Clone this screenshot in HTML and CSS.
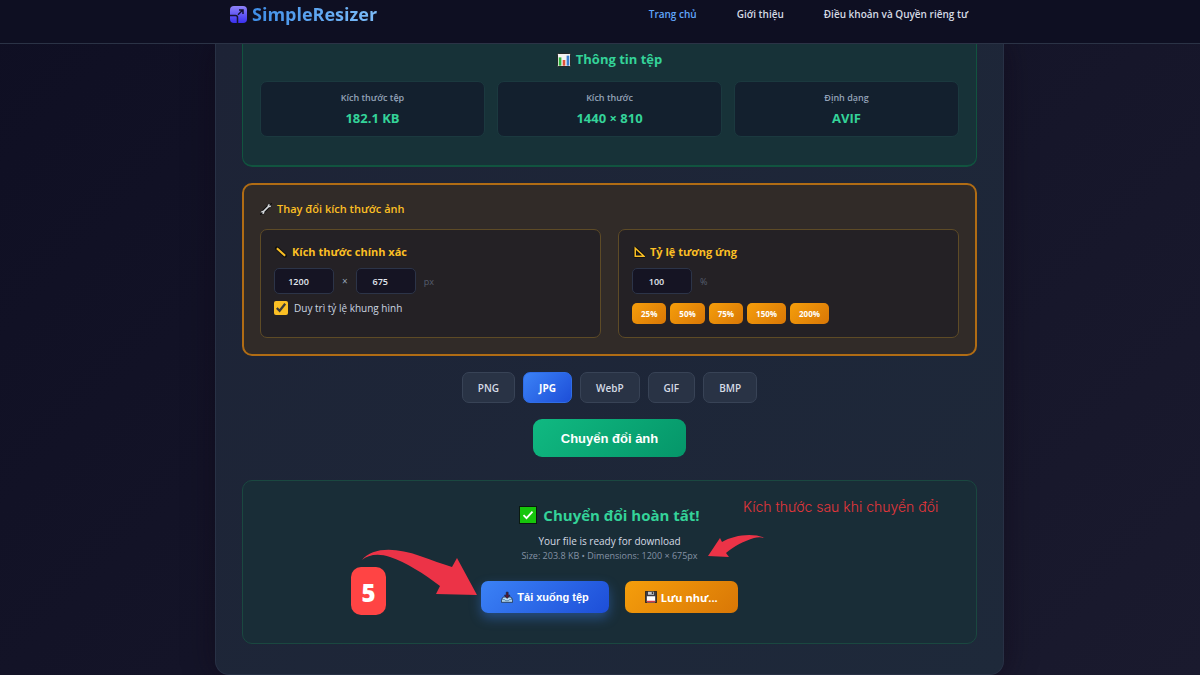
FILE: index.html
```html
<!DOCTYPE html>
<html lang="vi">
<head>
  <meta charset="UTF-8">
  <meta name="viewport" content="width=device-width, initial-scale=1.0">
  <title>SimpleResizer</title>
  <link rel="stylesheet" href="styles.css">
</head>
<body>
  <header class="header">
    <div class="header-content">
      <a href="#" class="logo">
        <svg class="logo-icon" viewBox="0 0 17 17" aria-hidden="true">
          <defs>
            <linearGradient id="logo-fill" x1="0" y1="0" x2="0" y2="1">
              <stop offset="0" stop-color="#8f83f8"/>
              <stop offset="1" stop-color="#3a30f0"/>
            </linearGradient>
          </defs>
          <rect width="17" height="17" rx="4" fill="url(#logo-fill)"/>
          <path d="M0 9.5h5.5q2 0 2 2V17M8 8.800l4.500-4.500M9 4h4v4" fill="none" stroke="#15132f" stroke-width="1.500"/>
        </svg>
        <span class="logo-text">SimpleResizer</span>
      </a>
      <nav class="nav">
        <a href="#" class="active">Trang chủ</a>
        <a href="#">Giới thiệu</a>
        <a href="#">Điều khoản và Quyền riêng tư</a>
      </nav>
    </div>
  </header>

  <main class="container">
    <section class="file-info">
      <h2 class="info-title">
        <svg class="emoji" viewBox="0 0 16 16" aria-hidden="true">
          <rect x="0.500" y="0.500" width="15" height="15" rx="1" fill="#f3f3f3" stroke="#111"/>
          <path d="M2 5h3v9.500H2z" fill="#2fb13a"/>
          <path d="M6.500 8h3v6.500h-3z" fill="#e0533a"/>
          <path d="M11 3h3v11.500h-3z" fill="#3c7fd0"/>
        </svg>
        Thông tin tệp
      </h2>
      <div class="info-grid">
        <div class="info-item">
          <div class="info-label">Kích thước tệp</div>
          <div class="info-value">182.1 KB</div>
        </div>
        <div class="info-item">
          <div class="info-label">Kích thước</div>
          <div class="info-value">1440 × 810</div>
        </div>
        <div class="info-item">
          <div class="info-label">Định dạng</div>
          <div class="info-value">AVIF</div>
        </div>
      </div>
    </section>

    <section class="resize">
      <h2 class="resize-title">
        <svg class="emoji small" viewBox="0 0 16 16" aria-hidden="true">
          <path d="M3.500 12.500l9-9" stroke="#111" stroke-width="5" stroke-linecap="round"/>
          <path d="M3.500 12.500l9-9" stroke="#d5d8dc" stroke-width="2.200"/>
          <circle cx="3.500" cy="12.500" r="2.300" fill="#d5d8dc"/>
          <circle cx="12.500" cy="3.500" r="2.300" fill="#d5d8dc"/>
          <path d="M12.800 3.200L16 0M3.200 12.800L0 16" stroke="#111" stroke-width="1.800"/>
        </svg>
        Thay đổi kích thước ảnh
      </h2>
      <div class="resize-grid">
        <div class="resize-box">
          <h3 class="box-title">
            <svg class="emoji small" viewBox="0 0 16 16" aria-hidden="true">
              <path d="M2.500 3l11 10" stroke="#111" stroke-width="5" stroke-linecap="round"/>
              <path d="M2.500 3l11 10" stroke="#fbbf24" stroke-width="2.800"/>
            </svg>
            Kích thước chính xác
          </h3>
          <div class="input-row">
            <input type="text" class="num-input" value="1200" aria-label="Chiều rộng">
            <span class="times">×</span>
            <input type="text" class="num-input" value="675" aria-label="Chiều cao">
            <span class="unit">px</span>
          </div>
          <label class="ratio">
            <input type="checkbox" checked>
            Duy trì tỷ lệ khung hình
          </label>
        </div>
        <div class="resize-box">
          <h3 class="box-title">
            <svg class="emoji small" viewBox="0 0 16 16" aria-hidden="true">
              <path d="M3 3v10.500h11.500z" fill="none" stroke="#111" stroke-width="4.500" stroke-linejoin="round"/>
              <path d="M3 3v10.500h11.500z" fill="none" stroke="#fbbf24" stroke-width="2"/>
            </svg>
            Tỷ lệ tương ứng
          </h3>
          <div class="input-row">
            <input type="text" class="num-input" value="100" aria-label="Tỷ lệ phần trăm">
            <span class="unit">%</span>
          </div>
          <div class="presets">
            <button type="button">25%</button>
            <button type="button">50%</button>
            <button type="button">75%</button>
            <button type="button">150%</button>
            <button type="button">200%</button>
          </div>
        </div>
      </div>
    </section>

    <div class="formats">
      <button type="button" class="format-btn">PNG</button>
      <button type="button" class="format-btn selected">JPG</button>
      <button type="button" class="format-btn">WebP</button>
      <button type="button" class="format-btn">GIF</button>
      <button type="button" class="format-btn">BMP</button>
    </div>

    <button type="button" class="convert-btn">Chuyển đổi ảnh</button>

    <section class="result">
      <h2 class="result-title">
        <svg class="emoji large" viewBox="0 0 18 18" aria-hidden="true">
          <rect x="0.500" y="0.500" width="17" height="17" fill="#16c60c" stroke="#0a1a10"/>
          <path d="M4.500 9.200l3 3 6-6.500" fill="none" stroke="#fff" stroke-width="1.800"/>
        </svg>
        Chuyển đổi hoàn tất!
      </h2>
      <p class="result-text">Your file is ready for download</p>
      <p class="result-size">Size: 203.8 KB • Dimensions: 1200 × 675px</p>
      <div class="result-actions">
        <button type="button" class="action-btn download">
          <svg class="emoji small" viewBox="0 0 16 16" aria-hidden="true">
            <path d="M3 8h10l2.500 3.500V15H0.500v-3.500z" fill="#b9dcf5" stroke="#14202e"/>
            <path d="M1 11.500h4l1 1.500h4l1-1.500h4" fill="none" stroke="#3b6e9a"/>
            <path d="M7 1.500h2.500v4H12L8.200 10 4.500 5.500H7z" fill="#5a1730" stroke="#14202e" stroke-width="0.800"/>
          </svg>
          Tải xuống tệp
        </button>
        <button type="button" class="action-btn save">
          <svg class="emoji small" viewBox="0 0 16 16" aria-hidden="true">
            <path d="M0.500 0.500h15v15h-15z" fill="#3c3c44" stroke="#15151a"/>
            <path d="M4 1h8v4H4z" fill="#c8c8cc"/>
            <path d="M9 1.500h2V4H9z" fill="#333"/>
            <path d="M2.500 7h11v8h-11z" fill="#fff"/>
            <path d="M2.500 13h11v2h-11z" fill="#d23a4a"/>
          </svg>
          Lưu như...
        </button>
      </div>

      <div class="note">Kích thước sau khi chuyển đổi</div>
      <div class="step">5</div>
      <svg class="arrow arrow-step" viewBox="0 0 116 48" aria-hidden="true">
        <path d="M0 11C10-2 34-2 58 7C70 11 80 15 90 18L95 9L115 46L74 45L78 37C62 25 44 13 28 8C16 4 6 6 0 11Z"/>
      </svg>
      <svg class="arrow arrow-size" viewBox="0 0 60 24" aria-hidden="true">
        <path d="M59 5C46-2 26 1 14 8L12 4L0 22L21 23L18 19C26 12 36 7 46 4C50 3 55 3 59 5Z"/>
      </svg>
    </section>
  </main>
</body>
</html>
```
FILE: styles.css
```css
* {
  margin: 0;
  padding: 0;
  box-sizing: border-box;
}

body {
  min-height: 100vh;
  padding-left: 19px;
  background: linear-gradient(135deg, #0f0f23 0%, #1a1a2e 100%);
  color: #e2e8f0;
  font-family: "Open Sans", "Noto Sans", sans-serif;
  font-size: 10px;
}

button,
input {
  font-family: inherit;
}

button {
  cursor: pointer;
}

.header {
  position: relative;
  height: 44px;
  margin-left: -19px;
  padding-right: 2px;
  background: #0e0f22;
  border-bottom: 1px solid #2b3346;
}

.header-content {
  display: flex;
  justify-content: space-between;
  align-items: center;
  max-width: 738px;
  height: 28px;
  margin: 0 auto;
}

.logo {
  display: flex;
  align-items: center;
  gap: 5px;
  text-decoration: none;
}

.logo-icon {
  width: 17px;
  height: 17px;
}

.logo-text {
  font-size: 18px;
  font-weight: 700;
  background: linear-gradient(90deg, #3f8ee8, #7cbcf8);
  -webkit-background-clip: text;
  background-clip: text;
  color: transparent;
}

.nav {
  display: flex;
  gap: 40px;
}

.nav a {
  color: #d5dae4;
  font-size: 10px;
  font-weight: 600;
  text-decoration: none;
}

.nav a.active {
  color: #60a5fa;
}

.container {
  max-width: 789px;
  margin: 0 auto;
  padding: 0 26px 30px;
  background: linear-gradient(135deg, #1d2336, #1e293a);
  border: 1px solid #283145;
  border-top: none;
  border-radius: 0 0 14px 14px;
  box-shadow: 0 0 30px rgba(15, 5, 20, 0.5);
}

.emoji {
  width: 14px;
  height: 14px;
  flex: none;
}

.emoji.small {
  width: 12px;
  height: 12px;
}

.emoji.large {
  width: 18px;
  height: 18px;
}

.file-info {
  padding: 6px 17px 28px;
  background: #173238;
  border: 1px solid #11543f;
  border-width: 0 1px 2px;
  border-radius: 0 0 10px 10px;
}

.info-title {
  display: flex;
  justify-content: center;
  align-items: center;
  gap: 5px;
  margin-bottom: 12px;
  color: #34d399;
  font-size: 13px;
  font-weight: 700;
  line-height: 19px;
}

.info-grid {
  display: grid;
  grid-template-columns: repeat(3, 1fr);
  gap: 12px;
}

.info-item {
  padding: 9px 10px;
  background: #13202e;
  border: 1px solid #1b393f;
  border-radius: 7px;
  text-align: center;
}

.info-label {
  margin-bottom: 4px;
  color: #94a3b8;
  font-size: 9px;
  font-weight: 600;
  line-height: 14px;
}

.info-value {
  color: #34d399;
  font-size: 13px;
  font-weight: 700;
  line-height: 18px;
}

.resize {
  margin-top: 16px;
  padding: 15px 16px 16px;
  background: #312b28;
  border: 2px solid #b06c14;
  border-radius: 10px;
}

.resize-title {
  display: flex;
  align-items: center;
  gap: 5px;
  margin-bottom: 11px;
  color: #fbbf24;
  font-size: 11px;
  font-weight: 600;
  line-height: 18px;
}

.resize-grid {
  display: grid;
  grid-template-columns: 1fr 1fr;
  gap: 17px;
}

.resize-box {
  padding: 13px;
  background: #242125;
  border: 1px solid #5e4b26;
  border-radius: 7px;
}

.box-title {
  display: flex;
  align-items: center;
  gap: 5px;
  margin-bottom: 7px;
  padding-left: 1px;
  color: #fbbf24;
  font-size: 11px;
  font-weight: 700;
  line-height: 18px;
}

.input-row {
  display: flex;
  align-items: center;
  gap: 8px;
}

.num-input {
  width: 60px;
  height: 26px;
  padding: 0 11px 0 0;
  background: #151423;
  border: 1px solid #2c3448;
  border-radius: 5px;
  color: #e2e8f0;
  font-size: 9px;
  font-weight: 600;
  text-align: center;
}

.times {
  color: #94a3b8;
  font-size: 10px;
}

.unit {
  color: #565e6e;
  font-size: 9px;
}

.ratio {
  display: flex;
  align-items: center;
  gap: 6px;
  margin-top: 7px;
  color: #cbd5e1;
  font-size: 10px;
  line-height: 14px;
}

.ratio input {
  width: 14px;
  height: 14px;
  accent-color: #fbbf24;
}

.presets {
  display: flex;
  gap: 4px;
  margin-top: 9px;
}

.presets button {
  height: 21px;
  padding: 0 9px;
  background: linear-gradient(135deg, #f59e0b, #d97706);
  border: none;
  border-radius: 5px;
  color: #fff;
  font-size: 8px;
  font-weight: 700;
}

.formats {
  display: flex;
  justify-content: center;
  gap: 8px;
  margin-top: 16px;
}

.format-btn {
  height: 31px;
  padding: 0 15px;
  background: #293345;
  border: 1px solid #384356;
  border-radius: 7px;
  color: #d5dbe5;
  font-size: 10px;
  font-weight: 600;
}

.format-btn.selected {
  background: linear-gradient(135deg, #3b82f6, #1d4ed8);
  border-color: #2f6de6;
  color: #fff;
  font-weight: 700;
}

.convert-btn {
  display: block;
  height: 38px;
  margin: 16px auto 0;
  padding: 0 28px;
  background: linear-gradient(135deg, #10b981, #059669);
  border: none;
  border-radius: 9px;
  color: #fff;
  font-family: "Liberation Sans", sans-serif;
  font-size: 13px;
  font-weight: 700;
}

.result {
  position: relative;
  margin-top: 23px;
  padding: 23px 17px 30px;
  background: #192d37;
  border: 1px solid #1a4840;
  border-radius: 10px;
  text-align: center;
}

.result-title {
  display: flex;
  justify-content: center;
  align-items: center;
  gap: 6px;
  margin-bottom: 8px;
  color: #34d399;
  font-size: 15px;
  font-weight: 700;
  line-height: 22px;
}

.result-text {
  color: #d5dbe5;
  font-size: 10px;
  line-height: 15px;
}

.result-size {
  color: #8592a5;
  font-size: 9px;
  line-height: 14px;
}

.result-actions {
  display: flex;
  justify-content: center;
  gap: 16px;
  margin-top: 18px;
}

.action-btn {
  display: flex;
  align-items: center;
  gap: 4px;
  height: 32px;
  padding: 0 20px;
  border: none;
  border-radius: 7px;
  color: #fff;
  font-size: 11px;
  font-weight: 700;
}

.download {
  background: linear-gradient(135deg, #3b82f6, #1d4ed8);
  box-shadow: 0 5px 12px rgba(59, 130, 246, 0.4);
  font-family: "Liberation Sans", sans-serif;
}

.save {
  background: linear-gradient(135deg, #f59e0b, #d97706);
}

/* guide marks over the result card */
.note,
.step,
.arrow {
  position: absolute;
}

.note {
  top: 16px;
  left: 500px;
  color: #e5363b;
  font-family: Inter, sans-serif;
  font-size: 14px;
  font-weight: 300;
  line-height: 20px;
  white-space: nowrap;
}

.step {
  top: 86px;
  left: 108px;
  width: 35px;
  height: 48px;
  background: #ff4444;
  border-radius: 10px;
  color: #fff;
  font-size: 24px;
  font-weight: 800;
  line-height: 51px;
}

.arrow {
  fill: #ec3347;
}

.arrow-step {
  top: 68px;
  left: 119px;
  width: 116px;
  height: 48px;
}

.arrow-size {
  top: 53px;
  left: 465px;
  width: 60px;
  height: 24px;
}
```
